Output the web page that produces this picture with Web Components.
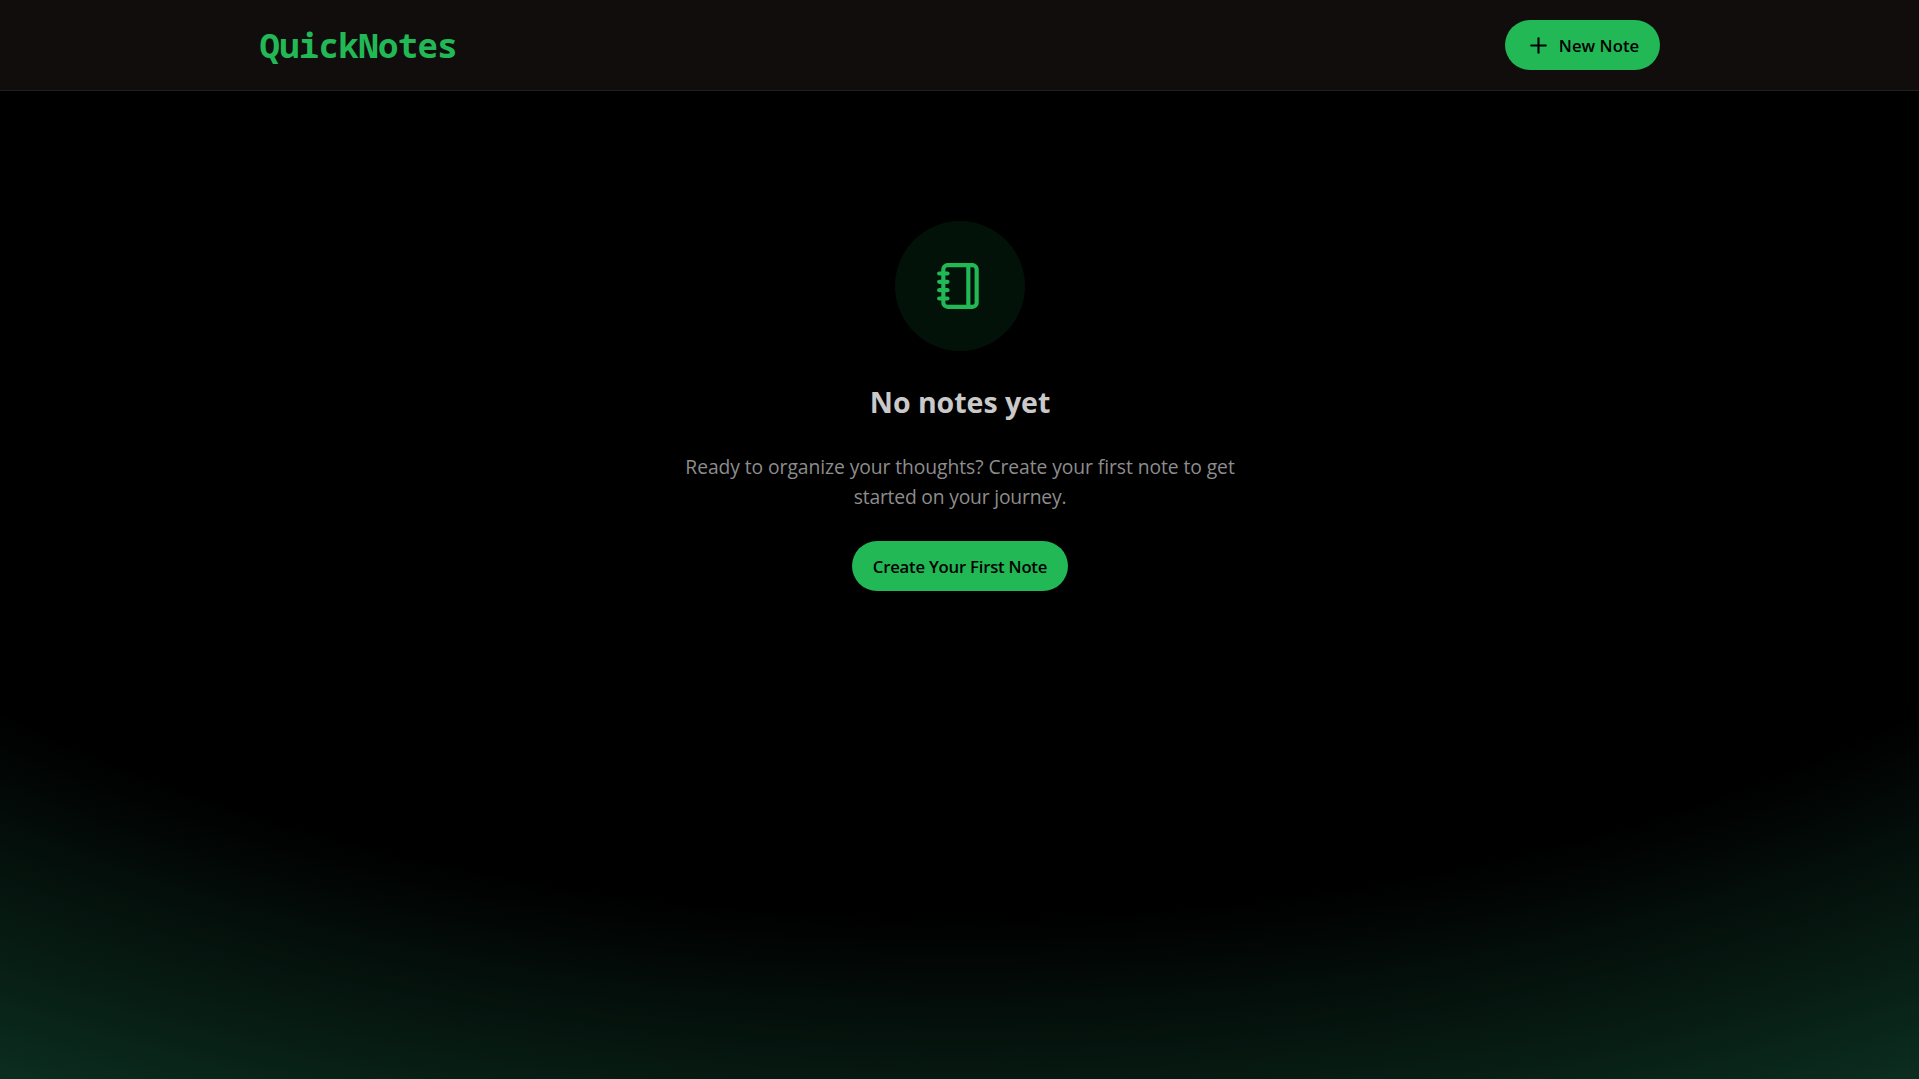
<!DOCTYPE html>
<html lang="en">
<head>
<meta charset="utf-8">
<title>QuickNotes</title>
<style>
  html, body { margin: 0; height: 100%; background: #1b1717; overflow: hidden; }
  body { font-family: "Segoe UI", "Open Sans", "Noto Sans", sans-serif; color: #cac9c9; }
</style>
</head>
<body>
<quick-notes-app></quick-notes-app>
<script>
class QnButton extends HTMLElement {
  constructor() {
    super();
    this.attachShadow({ mode: 'open' }).innerHTML = `
      <style>
        :host { display: inline-flex; }
        button { display: inline-flex; align-items: center; justify-content: center; gap: 8px;
          box-sizing: border-box; width: var(--btn-width); height: 50px; padding: 0 19px 0 20px; margin: 0; border: 0; border-radius: 25px;
          background: #21b855; color: #000; font: 600 16.7px/25px "Segoe UI", "Open Sans", sans-serif;
          letter-spacing: var(--btn-tracking, 0); white-space: nowrap; }
        ::slotted(qn-icon) { flex: none; }
      </style>
      <button type="button"><slot name="icon"></slot><slot></slot></button>`;
  }
}

class QnIcon extends HTMLElement {
  constructor() {
    super();
    const shapes = {
      plus: '<path d="M5 12h14"/><path d="M12 5v14"/>',
      notebook: '<path d="M2 6h4"/><path d="M2 10h4"/><path d="M2 14h4"/><path d="M2 18h4"/><rect width="16" height="20" x="4" y="2" rx="2"/><path d="M16 2v20"/>'
    };
    this.attachShadow({ mode: 'open' }).innerHTML = `
      <style>
        :host { display: block; width: var(--size, 25px); height: var(--size, 25px); }
        svg { display: block; width: 100%; height: 100%; }
      </style>
      <svg viewBox="0 0 24 24" fill="none" stroke="currentColor" stroke-width="2" stroke-linecap="round" stroke-linejoin="round">${shapes[this.getAttribute('name')] || ''}</svg>`;
  }
}

class QnNavbar extends HTMLElement {
  constructor() {
    super();
    this.attachShadow({ mode: 'open' }).innerHTML = `
      <style>
        :host { display: block; background: #110d0c; border-bottom: 1px solid #242020; }
        .inner { box-sizing: border-box; width: 1440px; height: 90px; margin: 0 auto; padding: 0 20px;
          display: flex; align-items: center; justify-content: space-between; }
        h1 { margin: 0; color: #21b855; font: 700 34px/45px Consolas, "Noto Sans Mono", "DejaVu Sans Mono", monospace; letter-spacing: -0.66px; }
      </style>
      <div class="inner"><h1><slot></slot></h1><slot name="action"></slot></div>`;
  }
}

class QnEmptyState extends HTMLElement {
  constructor() {
    super();
    this.attachShadow({ mode: 'open' }).innerHTML = `
      <style>
        :host { display: flex; flex-direction: column; align-items: center; width: 560px; margin: 0 auto; padding-top: 130px; text-align: center; }
        .disc { width: 130px; height: 130px; border-radius: 50%; background: #031208; color: #21b855;
          display: flex; align-items: center; justify-content: center; }
        .disc qn-icon { --size: 50px; }
        h3 { margin: 31px 0 0; font-size: 28.5px; line-height: 40px; font-weight: 700; letter-spacing: -0.03px; padding-left: 1px; }
        p { margin: 30px 0 29px; font-size: 19.3px; line-height: 30px; letter-spacing: -0.07px; color: #8d8d8d; padding-left: 1px; }
        p span { display: block; white-space: nowrap; }
        p span + span { letter-spacing: -0.19px; }
      </style>
      <div class="disc"><qn-icon name="notebook"></qn-icon></div>
      <h3><slot name="title"></slot></h3>
      <p><span>Ready to organize your thoughts? Create your first note to get</span><span>started on your journey.</span></p>
      <slot name="action"></slot>`;
  }
}

class QuickNotesApp extends HTMLElement {
  constructor() {
    super();
    this.attachShadow({ mode: 'open' }).innerHTML = `
      <style>
        :host { display: block; height: 100vh;
          background: radial-gradient(125% 125% at 50% 10%, #000 60%, #00ff9d40 100%); }
        .new { --btn-width: 155px; --btn-tracking: 0.03px; }
        .first { --btn-width: 216px; --btn-tracking: -0.22px; }
      </style>
      <qn-navbar>QuickNotes
        <qn-button class="new" slot="action"><qn-icon slot="icon" name="plus"></qn-icon><span>New Note</span></qn-button>
      </qn-navbar>
      <main>
        <qn-empty-state>
          <span slot="title">No notes yet</span>
          <qn-button class="first" slot="action"><span>Create Your First Note</span></qn-button>
        </qn-empty-state>
      </main>`;
  }
}

customElements.define('qn-icon', QnIcon);
customElements.define('qn-button', QnButton);
customElements.define('qn-navbar', QnNavbar);
customElements.define('qn-empty-state', QnEmptyState);
customElements.define('quick-notes-app', QuickNotesApp);
</script>
</body>
</html>
